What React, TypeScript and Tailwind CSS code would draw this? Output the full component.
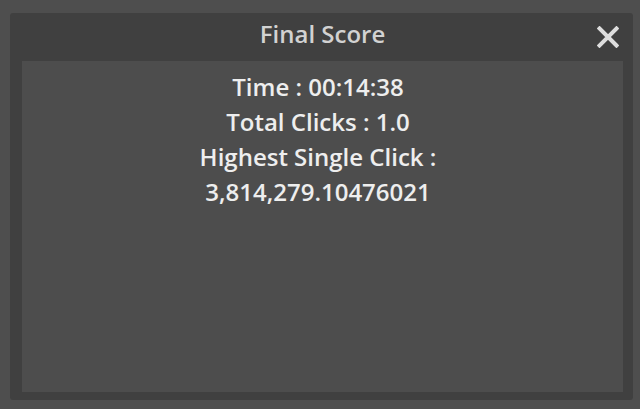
export default function App() {
  const lines = [
    "Time : 00:14:38",
    "Total Clicks : 1.0",
    "Highest Single Click :",
    "3,814,279.10476021",
  ];

  return (
    <div
      className="h-[409px] w-[640px] bg-[#4e4e4e] pl-[10px] pt-[13px]"
      style={{ fontFamily: '"Open Sans", sans-serif' }}
    >
      <div className="flex h-[387px] w-[623px] flex-col rounded-[3px] bg-[#404040] pb-[8px] pl-[12px] pr-[10px]">
        <div className="relative flex h-[48px] shrink-0 justify-center pt-[9px]">
          <span className="text-[24px] font-semibold leading-[24px] text-[#d2d2d2]">Final Score</span>
          <svg
            className="absolute right-[4px] top-[13px]"
            width="22"
            height="22"
            viewBox="0 0 22 22"
          >
            <path
              d="M2.5 2.5 L19.5 19.5 M19.5 2.5 L2.5 19.5"
              stroke="#dedede"
              strokeWidth="4"
              strokeLinecap="square"
            />
          </svg>
        </div>
        <div className="flex-1 bg-[#4d4d4d] pr-[9px] pt-[8px] text-center">
          {lines.map((line) => (
            <p key={line} className="text-[24px] font-semibold leading-[35px] text-[#eeeeee]">
              {line}
            </p>
          ))}
        </div>
      </div>
    </div>
  );
}
